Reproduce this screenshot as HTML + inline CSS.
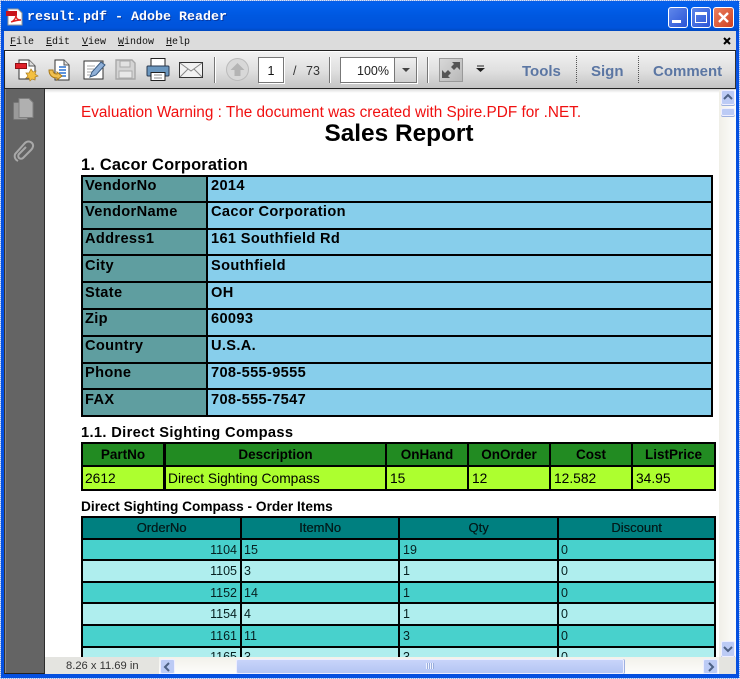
<!DOCTYPE html>
<html><head><meta charset="utf-8"><style>
html,body{margin:0;padding:0;width:740px;height:679px;overflow:hidden;background:#fff}
div,span{position:absolute;box-sizing:border-box}
u{text-decoration:underline}
.t{font:13.33px/16px "Liberation Sans",sans-serif;white-space:nowrap;color:#000}
.a{font:bold 14.6px/18px "Liberation Sans",sans-serif;letter-spacing:.35px}
.m{font:10px/12px "Liberation Mono",monospace;top:37px;color:#111}
.b{font:bold 15px/18px "Liberation Sans",sans-serif;color:#5b76a3;top:63px;white-space:nowrap}
.h{text-align:center;font-weight:bold;font-size:13.5px}
.s{font-size:13px;text-align:center;color:#021c1c;text-shadow:.3px 0 0 #021c1c}
.n{font-size:12.5px;color:#062020}
svg{position:absolute;overflow:visible}
</style></head><body>
<div style="left:0;top:0;width:740px;height:679px;background:#0055e5"></div>
<div style="left:0;top:1px;width:740px;height:30px;background:linear-gradient(#0a5fe8 0,#0260ee 10%,#0058e0 50%,#0053db 90%,#0048c0 100%);border-radius:7px 7px 0 0"></div>
<svg style="left:6px;top:8px" width="17" height="18" viewBox="0 0 17 18"><path d="M2 1h10l4 4v12H2z" fill="#fff" stroke="#999"/><rect x="0" y="3" width="11" height="5" fill="#c8141c"/><path d="M5 14c3-1 5-4 5-7 0 4 2 5 5 5-3 0-7 1-10 2z" fill="none" stroke="#d22" stroke-width="1.4"/></svg>
<div style="left:27px;top:9px;font:bold 13.33px/17px 'Liberation Mono',monospace;color:#fff;white-space:nowrap;text-shadow:1px 1px 0 #0838a0">result.pdf - Adobe Reader</div>
<!-- window buttons -->
<div style="left:668px;top:7px;width:20px;height:21px;border:1px solid #fff;border-radius:3px;background:linear-gradient(135deg,#5f87ea,#2a54d6)"></div>
<div style="left:672px;top:20px;width:9px;height:3px;background:#fff"></div>
<div style="left:691px;top:7px;width:20px;height:21px;border:1px solid #fff;border-radius:3px;background:linear-gradient(135deg,#5f87ea,#2a54d6)"></div>
<div style="left:695px;top:12px;width:12px;height:11px;border:1px solid #fff;border-top-width:3px"></div>
<div style="left:713px;top:7px;width:21px;height:21px;border:1px solid #fff;border-radius:3px;background:linear-gradient(135deg,#ea8060,#cf4020)"></div>
<svg style="left:713px;top:7px" width="21" height="21"><path d="M6 6l9 9M15 6l-9 9" stroke="#fff" stroke-width="2.4"/></svg>
<!-- inner client -->
<div style="left:4px;top:31px;width:732px;height:643px;background:#dcdcdc"></div>
<div class="m" style="left:10px"><u>F</u>ile</div>
<div class="m" style="left:46px"><u>E</u>dit</div>
<div class="m" style="left:82px"><u>V</u>iew</div>
<div class="m" style="left:118px"><u>W</u>indow</div>
<div class="m" style="left:166px"><u>H</u>elp</div>
<svg style="left:723px;top:37px" width="8" height="8"><path d="M1 1l6 6M7 1l-6 6" stroke="#000" stroke-width="2"/></svg>
<!-- toolbar -->
<div style="left:4px;top:50px;width:732px;height:39px;border:1px solid #222;border-right-color:#333;background:linear-gradient(#f2f2f2,#dfdfdf 55%,#c4c4c4);box-shadow:inset 0 1px 0 #fff"></div>
<!-- create icon -->
<svg style="left:15px;top:58px" width="24" height="24"><path d="M4 2h10l6 6v13H4z" fill="#fff" stroke="#333"/><path d="M14 2v6h6" fill="#ddd" stroke="#555"/><rect x="0.500" y="5.500" width="11" height="5" fill="#e0202a" stroke="#901015"/><path d="M16 11l2 3 3-1-1 3 3 2-3 1 0 3-3-1-2 2-1-3-3 0 2-2-2-3 3 0z" fill="#f4c040" stroke="#b08020" stroke-width=".7"/></svg>
<!-- combine icon -->
<svg style="left:47px;top:58px" width="24" height="24"><path d="M8 2h9l5 5v15H8z" fill="#fff" stroke="#333"/><path d="M17 2v5h5" fill="#ddd" stroke="#555"/><path d="M12 9h7M12 12h7M12 15h7M14 18h5" stroke="#2a70d0" stroke-width="1.600"/><path d="M2 12c0 5 3 8 8 8v2l5-4-5-4v2c-3 0-4-2-4-4z" fill="#f0c050" stroke="#a87818"/></svg>
<!-- edit icon -->
<svg style="left:82px;top:58px" width="24" height="24"><path d="M2 3h14l5 0v18H2z" fill="#fff" stroke="#333"/><path d="M5 8h8M5 11h7M5 14h5M5 17h3" stroke="#aaa"/><path d="M8 19l2-5 9-10 4 3-9 10z" fill="#8fb0d8" stroke="#3a5a80"/></svg>
<!-- save icon -->
<svg style="left:115px;top:59px" width="21" height="21"><path d="M1 1h16l3 3v16H1z" fill="#d4d4d4" stroke="#a8a8a8" stroke-width="1.400"/><rect x="5" y="2" width="10" height="6" fill="#e2e2e2" stroke="#aaa"/><rect x="4" y="12" width="13" height="7" fill="#e8e8e8" stroke="#aaa"/></svg>
<!-- print icon -->
<svg style="left:146px;top:57px" width="24" height="25"><rect x="5" y="1.500" width="14" height="9" fill="#fff" stroke="#222"/><path d="M2 9h20a1 1 0 0 1 1 1v8a1 1 0 0 1-1 1H2a1 1 0 0 1-1-1v-8a1 1 0 0 1 1-1z" fill="#6b97bf" stroke="#2a3a50"/><rect x="5" y="15.500" width="14" height="8" fill="#fff" stroke="#222"/><path d="M8 18h8M8 21h8" stroke="#888"/></svg>
<!-- mail icon -->
<svg style="left:179px;top:62px" width="24" height="17"><rect x=".5" y=".5" width="23" height="15" fill="#f2f2f2" stroke="#333"/><path d="M1 1l11 8 11-8M1 15l8-8M23 15l-8-8" fill="none" stroke="#888"/></svg>
<div style="left:214px;top:57px;width:1px;height:26px;background:#777;box-shadow:1px 0 0 #fff"></div>
<div style="left:226px;top:58px;width:23px;height:23px;border-radius:50%;border:1px solid #bbb;background:#d8d8d8"></div>
<svg style="left:226px;top:58px" width="23" height="23"><path d="M11.500 5l7 7h-4v6h-6v-6h-4z" fill="#b4b4b4"/></svg>
<div style="left:258px;top:57px;width:26px;height:26px;background:#fff;border:1px solid #777;box-shadow:1px 1px 0 #fff"></div>
<div class="t" style="left:258px;top:63px;width:26px;text-align:center;font-size:12.5px;color:#111">1</div>
<div class="t" style="left:293px;top:63px;font-size:12.5px;color:#333">/</div>
<div class="t" style="left:306px;top:63px;font-size:12.5px;color:#333">73</div>
<div style="left:329px;top:57px;width:1px;height:26px;background:#777;box-shadow:1px 0 0 #fff;display:block"></div>
<div style="left:340px;top:57px;width:77px;height:26px;background:#fff;border:1px solid #777;box-shadow:1px 1px 0 #fff"></div>
<div style="left:394px;top:58px;width:22px;height:24px;background:linear-gradient(#efefef,#d0d0d0);border-left:1px solid #777"></div>
<div class="t" style="left:357px;top:63px;font-size:12.5px;color:#222">100%</div>
<svg style="left:402px;top:68px" width="8" height="5"><path d="M0 0h8l-4 4z" fill="#444"/></svg>
<div style="left:427px;top:57px;width:1px;height:26px;background:#777;box-shadow:1px 0 0 #fff"></div>
<div style="left:439px;top:58px;width:24px;height:24px;border:1px solid #999;background:linear-gradient(135deg,#d8d8d8,#b8b8b8)"></div>
<svg style="left:439px;top:58px" width="24" height="24"><path d="M13 4h8v8l-3-3-3 3-3-3 3-3zM11 20H3v-8l3 3 3-3 3 3-3 3z" fill="#555"/></svg>
<svg style="left:476px;top:65px" width="9" height="9"><path d="M1 1h7" stroke="#222"/><path d="M0 3h9l-4.500 4z" fill="#222"/></svg>
<div class="b" style="left:522px">Tools</div>
<div style="left:576px;top:56px;width:0;height:27px;border-left:1px dotted #555"></div>
<div class="b" style="left:591px">Sign</div>
<div style="left:638px;top:56px;width:0;height:27px;border-left:1px dotted #555"></div>
<div class="b" style="left:653px">Comment</div>
<!-- left panel -->
<div style="left:4px;top:89px;width:41px;height:585px;background:#646464;border-left:1px solid #333;border-right:1px solid #2c2c2c;border-bottom:1px solid #222;box-shadow:inset 1px 0 0 #8a8a8a"></div>
<svg style="left:13px;top:98px" width="22" height="24"><rect x=".5" y="4.500" width="14" height="17" rx="1" fill="#9a9a9a" stroke="#777"/><path d="M6 .5h10l4 4v15H6z" fill="#b0b0b0" stroke="#808080"/></svg>
<svg style="left:13px;top:140px" width="22" height="24" viewBox="0 0 22 24"><path d="M5 21C1 19 1 15 3 13L12 3c2-2 5-2 7 0s1 5-1 7l-8 8c-1 1-3 1-4 0s-1-3 0-4l7-7" fill="none" stroke="#a8a8a8" stroke-width="2"/></svg>
<!-- page -->
<div style="left:45px;top:90px;width:674px;height:567px;background:#fff;overflow:hidden">
 <div style="left:0;top:0;width:674px;height:3px;background:linear-gradient(#e4e4e4,#fff)"></div>
 <div class="t" style="left:36px;top:14px;font-size:15.33px;line-height:18px;color:#f01010">Evaluation Warning : The document was created with Spire.PDF for .NET.</div>
 <div class="t" style="left:0;top:29px;width:708px;text-align:center;font-weight:bold;font-size:24.4px;line-height:30px">Sales Report</div>
 <div class="t a" style="left:36px;top:66px;font-size:16.4px;letter-spacing:.2px">1. Cacor Corporation</div>
 <!-- vendor table -->
 <div style="left:36px;top:85px;width:632px;height:242px;background:#000"></div>
 <div style="left:38px;top:87px;width:123px;height:238px;background:#5f9ea0"></div>
 <div style="left:163px;top:87px;width:503px;height:238px;background:#87ceeb"></div>
 <div style="left:36px;top:111px;width:632px;height:2px;background:#000"></div>
 <div style="left:36px;top:138px;width:632px;height:2px;background:#000"></div>
 <div style="left:36px;top:164px;width:632px;height:2px;background:#000"></div>
 <div style="left:36px;top:191px;width:632px;height:2px;background:#000"></div>
 <div style="left:36px;top:218px;width:632px;height:2px;background:#000"></div>
 <div style="left:36px;top:245px;width:632px;height:2px;background:#000"></div>
 <div style="left:36px;top:272px;width:632px;height:2px;background:#000"></div>
 <div style="left:36px;top:298px;width:632px;height:2px;background:#000"></div>
 <div class="t a" style="left:40px;top:87px">VendorNo</div><div class="t a" style="left:166px;top:87px">2014</div>
 <div class="t a" style="left:40px;top:113px">VendorName</div><div class="t a" style="left:166px;top:113px">Cacor Corporation</div>
 <div class="t a" style="left:40px;top:140px">Address1</div><div class="t a" style="left:166px;top:140px">161 Southfield Rd</div>
 <div class="t a" style="left:40px;top:167px">City</div><div class="t a" style="left:166px;top:167px">Southfield</div>
 <div class="t a" style="left:40px;top:194px">State</div><div class="t a" style="left:166px;top:194px">OH</div>
 <div class="t a" style="left:40px;top:220px">Zip</div><div class="t a" style="left:166px;top:220px">60093</div>
 <div class="t a" style="left:40px;top:247px">Country</div><div class="t a" style="left:166px;top:247px">U.S.A.</div>
 <div class="t a" style="left:40px;top:274px">Phone</div><div class="t a" style="left:166px;top:274px">708-555-9555</div>
 <div class="t a" style="left:40px;top:301px">FAX</div><div class="t a" style="left:166px;top:301px">708-555-7547</div>
 <!-- part table -->
 <div class="t a" style="left:36px;top:334px;font-size:14.65px">1.1. Direct Sighting Compass</div>
 <div style="left:36px;top:352px;width:635px;height:49px;background:#000"></div>
 <div style="left:38px;top:354px;width:631px;height:21px;background:#228b22"></div>
 <div style="left:38px;top:377px;width:631px;height:22px;background:#adff2f"></div>
 <div style="left:118px;top:352px;width:3px;height:49px;background:#000"></div>
 <div style="left:340px;top:352px;width:2px;height:49px;background:#000"></div>
 <div style="left:422px;top:352px;width:2px;height:49px;background:#000"></div>
 <div style="left:504px;top:352px;width:2px;height:49px;background:#000"></div>
 <div style="left:586px;top:352px;width:2px;height:49px;background:#000"></div>
 <div class="t h" style="left:38px;top:357px;width:80px">PartNo</div>
 <div class="t h" style="left:121px;top:357px;width:219px">Description</div>
 <div class="t h" style="left:342px;top:357px;width:80px">OnHand</div>
 <div class="t h" style="left:424px;top:357px;width:80px">OnOrder</div>
 <div class="t h" style="left:506px;top:357px;width:80px">Cost</div>
 <div class="t h" style="left:588px;top:357px;width:81px">ListPrice</div>
 <div class="t" style="left:40px;top:381px;font-size:13.8px">2612</div>
 <div class="t" style="left:123px;top:381px;font-size:13.8px">Direct Sighting Compass</div>
 <div class="t" style="left:345px;top:381px;font-size:13.8px">15</div>
 <div class="t" style="left:427px;top:381px;font-size:13.8px">12</div>
 <div class="t" style="left:509px;top:381px;font-size:13.8px">12.582</div>
 <div class="t" style="left:591px;top:381px;font-size:13.8px">34.95</div>
 <!-- order table -->
 <div class="t" style="left:36px;top:409px;font-weight:bold;font-size:13.7px">Direct Sighting Compass - Order Items</div>
 <div style="left:36px;top:426px;width:635px;height:150px;background:#000"></div>
 <div style="left:38px;top:428px;width:631px;height:20px;background:#008080"></div>
 <div style="left:38px;top:450px;width:631px;height:19px;background:#48d1cc"></div>
 <div style="left:38px;top:471px;width:631px;height:20px;background:#afeeee"></div>
 <div style="left:38px;top:493px;width:631px;height:19px;background:#48d1cc"></div>
 <div style="left:38px;top:514px;width:631px;height:20px;background:#afeeee"></div>
 <div style="left:38px;top:536px;width:631px;height:20px;background:#48d1cc"></div>
 <div style="left:38px;top:558px;width:631px;height:18px;background:#afeeee"></div>
 <div style="left:195px;top:426px;width:2px;height:150px;background:#000"></div>
 <div style="left:353px;top:426px;width:2px;height:150px;background:#000"></div>
 <div style="left:512px;top:426px;width:2px;height:150px;background:#000"></div>
 <div class="t s" style="left:38px;top:430px;width:157px">OrderNo</div>
 <div class="t s" style="left:197px;top:430px;width:156px">ItemNo</div>
 <div class="t s" style="left:355px;top:430px;width:157px">Qty</div>
 <div class="t s" style="left:514px;top:430px;width:155px">Discount</div>
 <div class="t n" style="left:38px;top:452px;width:154px;text-align:right">1104</div><div class="t n" style="left:199px;top:452px">15</div><div class="t n" style="left:358px;top:452px">19</div><div class="t n" style="left:516px;top:452px">0</div>
 <div class="t n" style="left:38px;top:473px;width:154px;text-align:right">1105</div><div class="t n" style="left:199px;top:473px">3</div><div class="t n" style="left:358px;top:473px">1</div><div class="t n" style="left:516px;top:473px">0</div>
 <div class="t n" style="left:38px;top:495px;width:154px;text-align:right">1152</div><div class="t n" style="left:199px;top:495px">14</div><div class="t n" style="left:358px;top:495px">1</div><div class="t n" style="left:516px;top:495px">0</div>
 <div class="t n" style="left:38px;top:516px;width:154px;text-align:right">1154</div><div class="t n" style="left:199px;top:516px">4</div><div class="t n" style="left:358px;top:516px">1</div><div class="t n" style="left:516px;top:516px">0</div>
 <div class="t n" style="left:38px;top:538px;width:154px;text-align:right">1161</div><div class="t n" style="left:199px;top:538px">11</div><div class="t n" style="left:358px;top:538px">3</div><div class="t n" style="left:516px;top:538px">0</div>
 <div class="t n" style="left:38px;top:559px;width:154px;text-align:right">1165</div><div class="t n" style="left:199px;top:559px">3</div><div class="t n" style="left:358px;top:559px">3</div><div class="t n" style="left:516px;top:559px">0</div>
</div>
<!-- vertical scrollbar -->
<div style="left:719px;top:90px;width:17px;height:567px;background:linear-gradient(90deg,#f0efe8,#fdfdfb)"></div>
<div style="left:721px;top:90px;width:14px;height:15px;border:1px solid #eef;border-radius:2px;background:#bccbf5;box-shadow:0 1px 0 #9db0e0"></div>
<svg style="left:723px;top:94px" width="10" height="7"><path d="M1 5l4-4 4 4" fill="none" stroke="#4d6185" stroke-width="2"/></svg>
<div style="left:721px;top:108px;width:14px;height:8px;border:1px solid #eef;border-radius:2px;background:#bccbf5;box-shadow:0 1px 0 #9db0e0"></div>
<div style="left:721px;top:641px;width:14px;height:16px;border:1px solid #eef;border-radius:2px;background:#bccbf5;box-shadow:0 1px 0 #9db0e0"></div>
<svg style="left:723px;top:646px" width="10" height="7"><path d="M1 1l4 4 4-4" fill="none" stroke="#4d6185" stroke-width="2"/></svg>
<!-- status + hscroll -->
<div style="left:45px;top:657px;width:691px;height:17px;background:#e4e4e0"></div>
<div class="t" style="left:66px;top:659px;font-size:11.2px;line-height:15px;color:#333">8.26 x 11.69 in</div>
<div style="left:159px;top:657px;width:560px;height:17px;background:linear-gradient(#f2f1ea,#fdfdfb)"></div>
<div style="left:160px;top:659px;width:15px;height:15px;border:1px solid #eef;border-radius:2px;background:#bccbf5"></div>
<svg style="left:164px;top:662px" width="7" height="10"><path d="M5 1L1 5l4 4" fill="none" stroke="#4d6185" stroke-width="2"/></svg>
<div style="left:236px;top:659px;width:388px;height:15px;border:1px solid #eef;border-radius:2px;background:linear-gradient(#c8d4fa,#b4c5f3);box-shadow:1px 0 0 #9db0e0"></div>
<div style="left:426px;top:663px;width:8px;height:6px;background:repeating-linear-gradient(90deg,#eef2ff 0 1px,#9aaedc 1px 2px)"></div>
<div style="left:703px;top:659px;width:15px;height:15px;border:1px solid #eef;border-radius:2px;background:#bccbf5"></div>
<svg style="left:707px;top:662px" width="7" height="10"><path d="M2 1l4 4-4 4" fill="none" stroke="#4d6185" stroke-width="2"/></svg>
<!-- frame edges -->
<div style="left:0;top:31px;width:4px;height:648px;background:#0550e0"></div>
<div style="left:736px;top:31px;width:4px;height:648px;background:#0550e0"></div>
<div style="left:0;top:674px;width:740px;height:5px;background:#0550e0"></div>
<div style="left:0;top:0;width:740px;height:1px;background:repeating-linear-gradient(90deg,#dfe6f5 0 1px,#8aa8e8 1px 2px)"></div>
<div style="left:0;top:678px;width:740px;height:1px;background:repeating-linear-gradient(90deg,#dfe6f5 0 1px,#8aa8e8 1px 2px)"></div>
<div style="left:0;top:0;width:1px;height:679px;background:repeating-linear-gradient(#dfe6f5 0 1px,#8aa8e8 1px 2px)"></div>
<div style="left:739px;top:0;width:1px;height:679px;background:repeating-linear-gradient(#dfe6f5 0 1px,#8aa8e8 1px 2px)"></div>
</body></html>
